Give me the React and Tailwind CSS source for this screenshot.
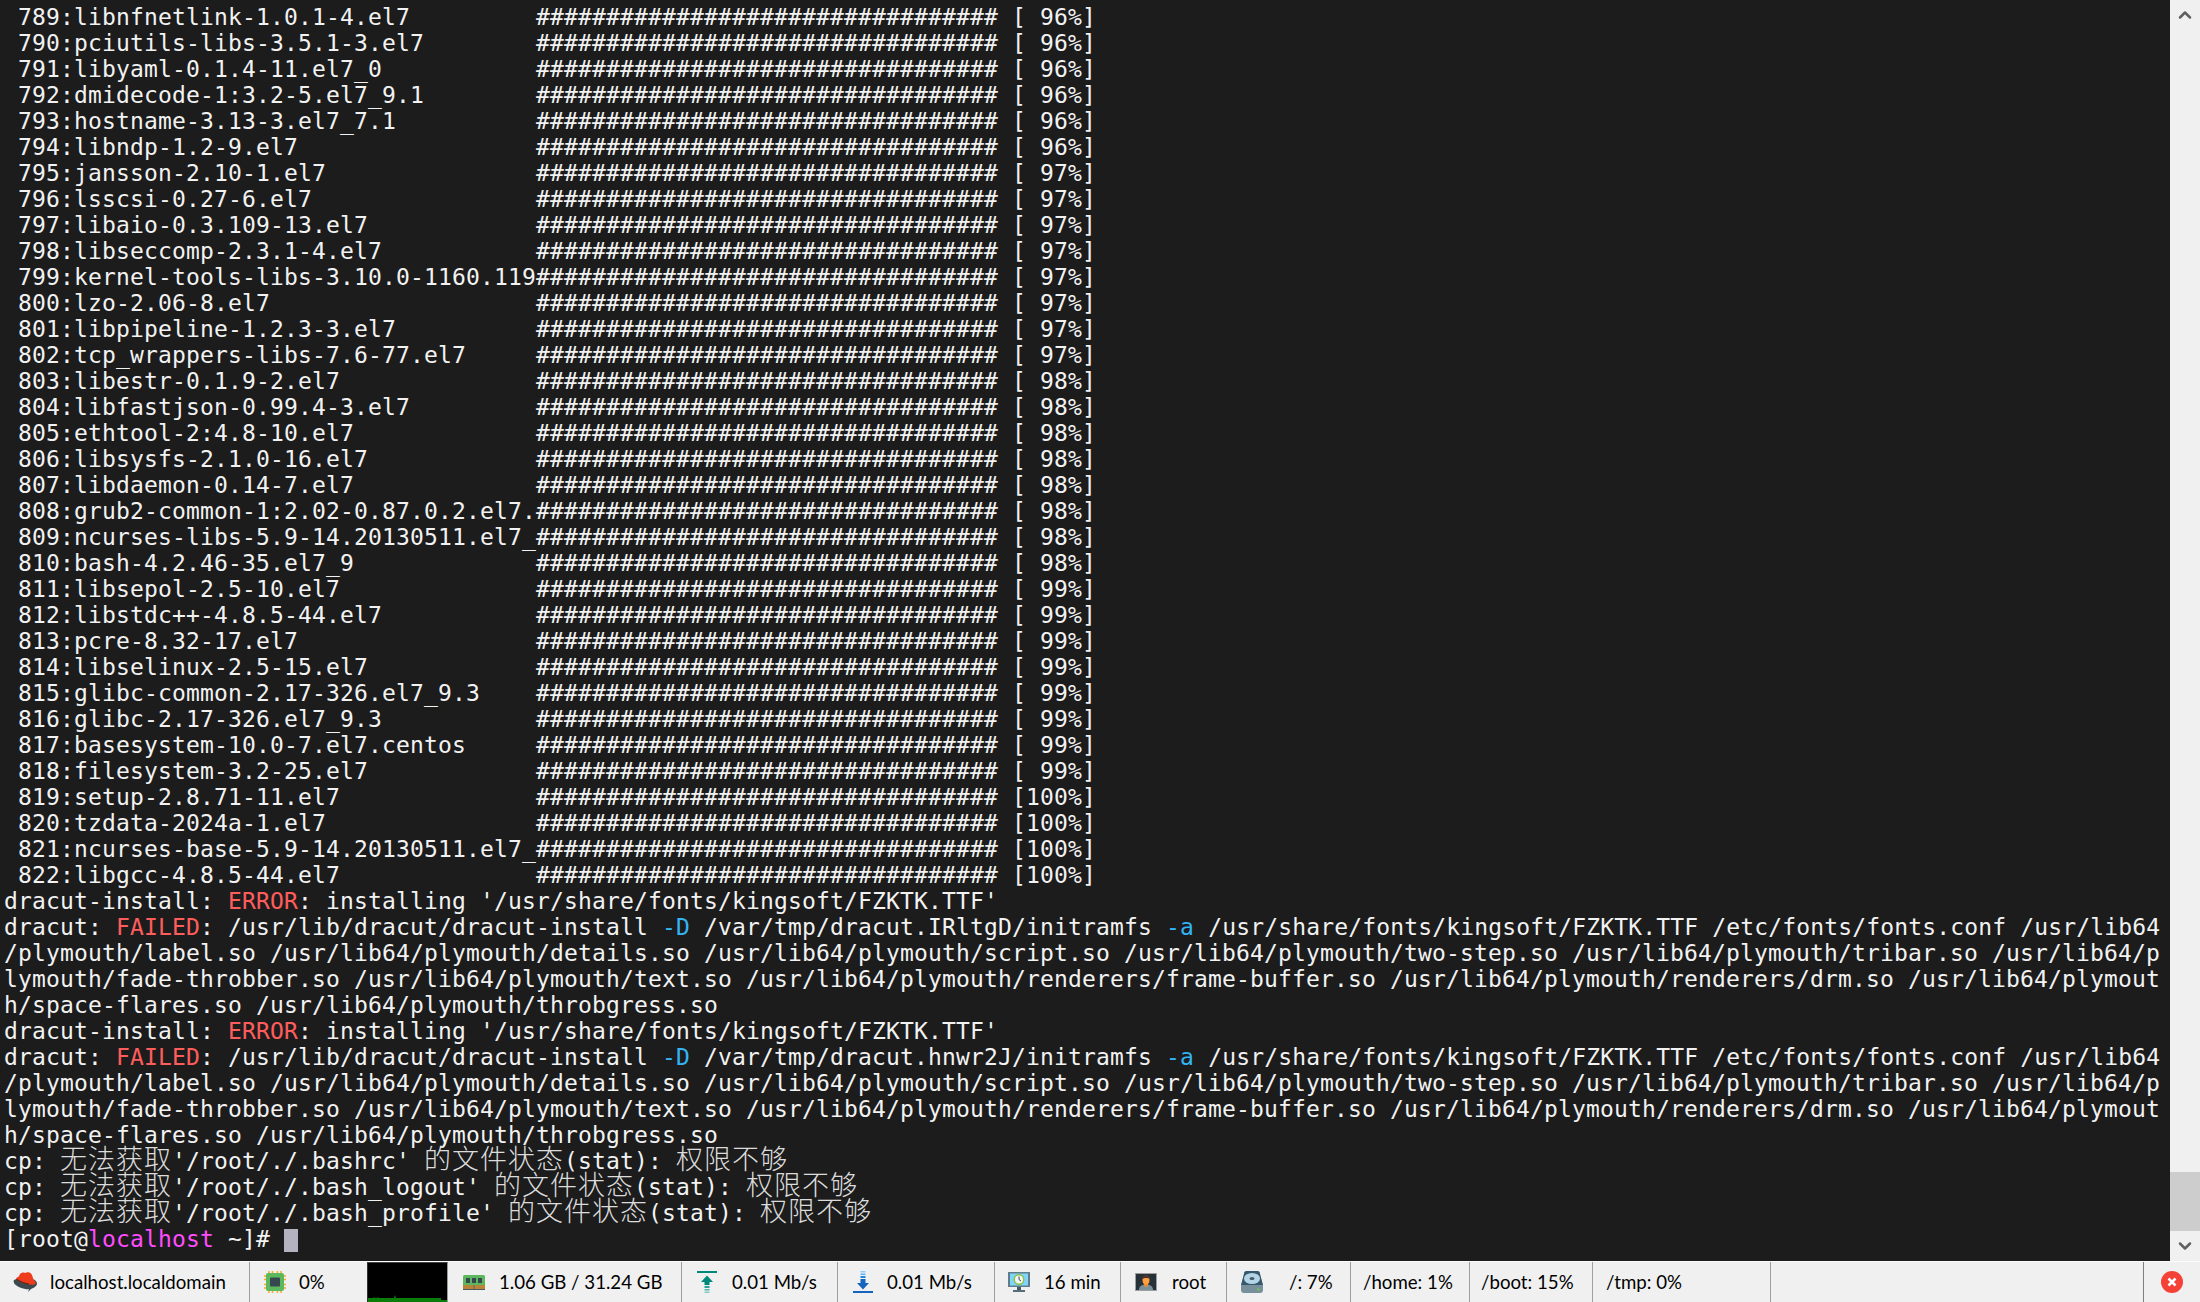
import { ChevronUp, ChevronDown } from 'lucide-react';

const HASHES = '#'.repeat(33);

const packages = [
  ['789:libnfnetlink-1.0.1-4.el7', 96],
  ['790:pciutils-libs-3.5.1-3.el7', 96],
  ['791:libyaml-0.1.4-11.el7_0', 96],
  ['792:dmidecode-1:3.2-5.el7_9.1', 96],
  ['793:hostname-3.13-3.el7_7.1', 96],
  ['794:libndp-1.2-9.el7', 96],
  ['795:jansson-2.10-1.el7', 97],
  ['796:lsscsi-0.27-6.el7', 97],
  ['797:libaio-0.3.109-13.el7', 97],
  ['798:libseccomp-2.3.1-4.el7', 97],
  ['799:kernel-tools-libs-3.10.0-1160.119', 97],
  ['800:lzo-2.06-8.el7', 97],
  ['801:libpipeline-1.2.3-3.el7', 97],
  ['802:tcp_wrappers-libs-7.6-77.el7', 97],
  ['803:libestr-0.1.9-2.el7', 98],
  ['804:libfastjson-0.99.4-3.el7', 98],
  ['805:ethtool-2:4.8-10.el7', 98],
  ['806:libsysfs-2.1.0-16.el7', 98],
  ['807:libdaemon-0.14-7.el7', 98],
  ['808:grub2-common-1:2.02-0.87.0.2.el7.', 98],
  ['809:ncurses-libs-5.9-14.20130511.el7_', 98],
  ['810:bash-4.2.46-35.el7_9', 98],
  ['811:libsepol-2.5-10.el7', 99],
  ['812:libstdc++-4.8.5-44.el7', 99],
  ['813:pcre-8.32-17.el7', 99],
  ['814:libselinux-2.5-15.el7', 99],
  ['815:glibc-common-2.17-326.el7_9.3', 99],
  ['816:glibc-2.17-326.el7_9.3', 99],
  ['817:basesystem-10.0-7.el7.centos', 99],
  ['818:filesystem-3.2-25.el7', 99],
  ['819:setup-2.8.71-11.el7', 100],
  ['820:tzdata-2024a-1.el7', 100],
  ['821:ncurses-base-5.9-14.20130511.el7_', 100],
  ['822:libgcc-4.8.5-44.el7', 100],
];

function Line({ children }) {
  return <div className="h-[26px] leading-[26px] whitespace-pre">{children}</div>;
}

const Red = ({ children }) => <span className="text-[#ff5c5c]">{children}</span>;
const Cyan = ({ children }) => <span className="text-[#33b5f5]">{children}</span>;
const Cjk = ({ children }) => (
  <span className="font-['Noto_Sans_CJK_SC',sans-serif] text-[27px] leading-[0] tracking-[1px] font-light text-[#dcdcdc]">{children}</span>
);

function DracutBlock({ tmp }) {
  return (
    <>
      <Line>dracut-install: <Red>ERROR</Red>: installing '/usr/share/fonts/kingsoft/FZKTK.TTF'</Line>
      <Line>dracut: <Red>FAILED</Red>: /usr/lib/dracut/dracut-install <Cyan>-D</Cyan> /var/tmp/dracut.{tmp}/initramfs <Cyan>-a</Cyan> /usr/share/fonts/kingsoft/FZKTK.TTF /etc/fonts/fonts.conf /usr/lib64</Line>
      <Line>/plymouth/label.so /usr/lib64/plymouth/details.so /usr/lib64/plymouth/script.so /usr/lib64/plymouth/two-step.so /usr/lib64/plymouth/tribar.so /usr/lib64/p</Line>
      <Line>lymouth/fade-throbber.so /usr/lib64/plymouth/text.so /usr/lib64/plymouth/renderers/frame-buffer.so /usr/lib64/plymouth/renderers/drm.so /usr/lib64/plymout</Line>
      <Line>h/space-flares.so /usr/lib64/plymouth/throbgress.so</Line>
    </>
  );
}

function RedHatIcon() {
  return (
    <svg width="24" height="20" viewBox="0 0 24 20">
      <path d="M1 8c-1.500 3 1.500 5.500 6 7.500 3 1.300 6.500 2 9 1.800l-1 2.700 3-3c3-1 6-3 6-5.500 0-2-1.500-3-3-4L8 5z" fill="#3c4a50" />
      <path d="M6.500 3C8 .5 10 0 12 1c1.500-1 4-1.500 6 .5 1.500 2 2 4.500 2.500 6.500 1.500.5 2.500 2 2 3.500-1 1.800-4.500 1.500-8 .5-4-1-8-3-10.500-4.500C3 7 2.800 6 3.800 5.500 5 5.200 6 4.500 6.500 3z" fill="#ee3c1c" />
      <path d="M4 7.500c3.500 2 8 4 12 4.500" stroke="#7a1a0a" strokeWidth="1" fill="none" />
    </svg>
  );
}

function CpuIcon() {
  return (
    <svg width="22" height="22" viewBox="0 0 22 22">
      <path d="M5 0v22M8.500 0v22M13.500 0v22M17 0v22M0 5h22M0 8.500h22M0 13.500h22M0 17h22" stroke="#ffa726" strokeWidth="1.500" />
      <rect x="2" y="2" width="18" height="18" rx="2" fill="#5cb85c" />
      <rect x="6" y="6.500" width="10" height="9" rx="1" fill="#37474f" />
    </svg>
  );
}

function RamIcon() {
  return (
    <svg width="22" height="15" viewBox="0 0 22 15">
      <path d="M1.500 0h19A1.500 1.500 0 0 1 22 1.500V10H0V1.500A1.500 1.500 0 0 1 1.500 0z" fill="#5cb85c" />
      <rect x="3" y="3" width="4" height="5" fill="#37474f" />
      <rect x="9" y="3" width="4" height="5" fill="#37474f" />
      <rect x="15" y="3" width="4" height="5" fill="#37474f" />
      <rect x="0" y="10" width="22" height="4" fill="#b98338" />
      <rect x="10.500" y="10" width="1" height="4" fill="#5d6b70" />
      <rect x="0" y="14" width="22" height="1" fill="#455a64" />
    </svg>
  );
}

function UploadIcon() {
  return (
    <svg width="20" height="22" viewBox="0 0 20 22">
      <rect x="0" y="0" width="20" height="2" fill="#00897b" />
      <path d="M10 4.500l6 6.500h-3.500v3h-5v-3H4z" fill="#00897b" />
      <rect x="7.500" y="15" width="5" height="2" fill="#26a69a" />
      <rect x="7.500" y="18" width="5" height="1.500" fill="#4db6ac" />
      <rect x="7.500" y="20.500" width="5" height="1.500" fill="#80cbc4" />
    </svg>
  );
}

function DownloadIcon() {
  return (
    <svg width="20" height="22" viewBox="0 0 20 22">
      <rect x="7.500" y="0" width="5" height="1.500" fill="#90caf9" />
      <rect x="7.500" y="2.500" width="5" height="1.500" fill="#64b5f6" />
      <rect x="7.500" y="5" width="5" height="2" fill="#1e88e5" />
      <path d="M7.500 8h5v4H16l-6 6.500L4 12h3.500z" fill="#1565c0" />
      <rect x="0" y="20" width="20" height="2" fill="#1565c0" />
    </svg>
  );
}

function MonitorIcon() {
  return (
    <svg width="22" height="20" viewBox="0 0 22 20">
      <rect x="0" y="0" width="22" height="15" fill="#607d8b" />
      <rect x="2" y="1.500" width="18" height="12" fill="#81d4fa" />
      <circle cx="11" cy="7.500" r="5.500" fill="#8bc34a" />
      <circle cx="11" cy="7.500" r="4" fill="#f5f5f5" />
      <path d="M11 4.500v3l2 1.500" stroke="#37474f" strokeWidth="1" fill="none" />
      <rect x="9" y="15" width="4" height="3" fill="#455a64" />
      <rect x="5" y="18" width="12" height="2" fill="#546e7a" />
    </svg>
  );
}

function UserIcon() {
  return (
    <svg width="22" height="18" viewBox="0 0 22 18">
      <rect x="0" y="0" width="22" height="18" fill="#9e9e9e" />
      <rect x="1" y="1" width="20" height="16" fill="#263238" />
      <path d="M4 17c0-4 3-5.500 7-5.500s7 1.500 7 5.500z" fill="#78909c" />
      <path d="M9 10h4v3l-2 1.500L9 13z" fill="#e6893a" />
      <ellipse cx="11" cy="7" rx="3.500" ry="4.500" fill="#ff9f3f" />
      <path d="M7.500 6c0-3 1.500-4 3.500-4s3.500 1 3.500 4c-1-1.500-5.500-1.500-7 0z" fill="#4e342e" />
    </svg>
  );
}

function DiskIcon() {
  return (
    <svg width="22" height="22" viewBox="0 0 22 22">
      <path d="M3 3a3 3 0 0 1 3-3h10a3 3 0 0 1 3 3l3 12v4a3 3 0 0 1-3 3H3a3 3 0 0 1-3-3v-4z" fill="#78909c" />
      <path d="M3 3a3 3 0 0 1 3-3h10a3 3 0 0 1 3 3l3 11H0z" fill="#37596e" />
      <ellipse cx="11" cy="7.500" rx="8" ry="5.500" fill="#b3d4e6" />
      <ellipse cx="11" cy="7.500" rx="2.500" ry="1.500" fill="#455a64" />
      <rect x="16" y="17.500" width="2.500" height="2" fill="#76c043" />
    </svg>
  );
}

function GraphCell() {
  return (
    <div className="w-[81px] h-full bg-black border-t border-l border-r border-t-[#444] border-l-[#333] border-r-[#999] flex flex-col justify-end">
      <svg width="79" height="7" viewBox="0 0 79 7" className="block">
        <path d="M0 7V3h5l1-1 1 1h2l1-1 1 1h15l1-3 1 3h45v2h7v2z" fill="#0a7d0a" />
      </svg>
    </div>
  );
}

function Cell({ className, children }) {
  return (
    <div className={`h-full flex items-center border-r border-[#a0a0a0] shrink-0 whitespace-pre ${className}`}>
      {children}
    </div>
  );
}

export default function App() {
  return (
    <div className="w-[2200px] h-[1302px] flex flex-col overflow-hidden bg-[#1c1c1c]">
      <div className="flex flex-1 min-h-0">
        <div className="flex-1 pt-[4px] pl-[4px] text-[23px] tracking-[0.153px] text-[#f2f2f2] font-['DejaVu_Sans_Mono',monospace] overflow-hidden">
          {packages.map(([name, pct]) => (
            <Line key={name}>{` ${name}`.padEnd(38)}{HASHES} [{String(pct).padStart(3)}%]</Line>
          ))}
          <DracutBlock tmp="IRltgD" />
          <DracutBlock tmp="hnwr2J" />
          <Line>cp: <Cjk>无法获取</Cjk>'/root/./.bashrc' <Cjk>的文件状态</Cjk>(stat): <Cjk>权限不够</Cjk></Line>
          <Line>cp: <Cjk>无法获取</Cjk>'/root/./.bash_logout' <Cjk>的文件状态</Cjk>(stat): <Cjk>权限不够</Cjk></Line>
          <Line>cp: <Cjk>无法获取</Cjk>'/root/./.bash_profile' <Cjk>的文件状态</Cjk>(stat): <Cjk>权限不够</Cjk></Line>
          <Line>[root@<span className="text-[#ff4dff]">localhost</span> ~]# <span className="inline-block w-[14px] h-[23px] align-[-5px] bg-[#b4b2c0]" /></Line>
        </div>
        <div className="w-[30px] shrink-0 bg-[#f0f0f0] flex flex-col items-center">
          <div className="h-[30px] flex items-center"><ChevronUp size={20} strokeWidth={3} className="text-[#606060]" /></div>
          <div className="flex-1" />
          <div className="w-full h-[59px] bg-[#cdcdcd]" />
          <div className="h-[30px] flex items-center"><ChevronDown size={20} strokeWidth={3} className="text-[#606060]" /></div>
        </div>
      </div>

      <div className="h-[41px] shrink-0 flex bg-[#f0f0f0] border-t border-[#fcfcfc] text-black text-[18.67px] font-['Lato',sans-serif]">
        <Cell className="w-[250px] pl-[13px] gap-[13px]"><RedHatIcon />localhost.localdomain</Cell>
        <div className="w-[117px] h-full flex items-center pl-[14px] gap-[13px]"><CpuIcon />0%</div>
        <GraphCell />
        <Cell className="w-[234px] pl-[15px] gap-[14px]"><RamIcon />1.06 GB / 31.24 GB</Cell>
        <Cell className="w-[156px] pl-[15px] gap-[15px]"><UploadIcon />0.01 Mb/s</Cell>
        <Cell className="w-[157px] pl-[15px] gap-[14px]"><DownloadIcon />0.01 Mb/s</Cell>
        <Cell className="w-[126px] pl-[13px] gap-[14px]"><MonitorIcon />16 min</Cell>
        <Cell className="w-[106px] pl-[14px] gap-[15px]"><UserIcon />root</Cell>
        <Cell className="w-[124px] pl-[14px] gap-[26px]"><DiskIcon />/: 7%</Cell>
        <Cell className="w-[119px] pl-[12px]">/home: 1%</Cell>
        <Cell className="w-[123px] pl-[11px]">/boot: 15%</Cell>
        <Cell className="w-[178px] pl-[13px]">/tmp: 0%</Cell>
        <div className="flex-1 border-r border-[#808080]" />
        <div className="w-[56px] h-full flex items-center justify-center">
          <svg width="22" height="22" viewBox="0 0 22 22">
            <circle cx="11" cy="11" r="11" fill="#f44336" />
            <path d="M7.500 7.500l7 7M14.500 7.500l-7 7" stroke="#fff" strokeWidth="2.500" />
          </svg>
        </div>
      </div>
    </div>
  );
}
